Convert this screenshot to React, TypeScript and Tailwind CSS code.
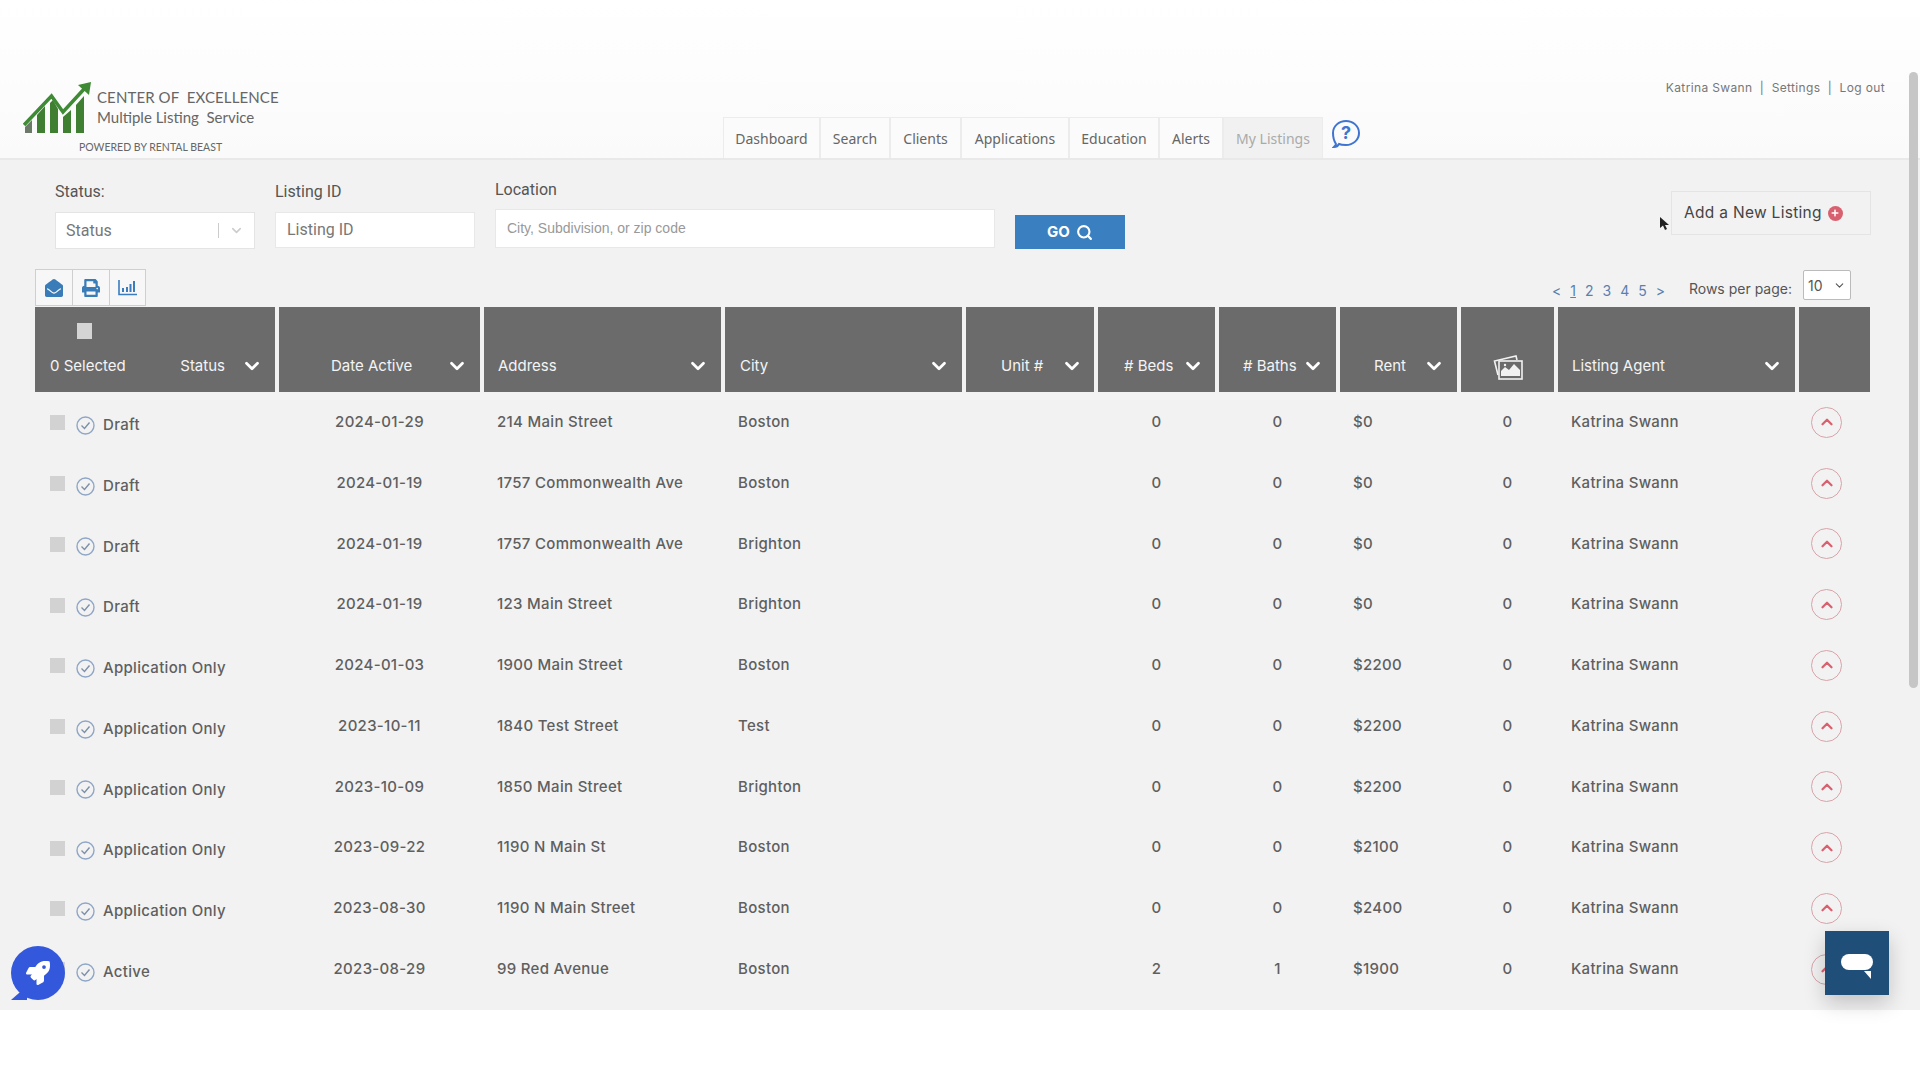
import { ChevronDown, ChevronUp, Search } from 'lucide-react'
import { FaEnvelopeOpen, FaPrint, FaRocket, FaPlus } from 'react-icons/fa'

const columns = 'grid grid-cols-[240px_201px_237px_237px_128px_117px_117px_117px_93px_237px_71px] gap-x-[4px]'

const listings = [
    { status: 'Draft', date: '2024-01-29', address: '214 Main Street', city: 'Boston', beds: 0, baths: 0, rent: '$0' },
    { status: 'Draft', date: '2024-01-19', address: '1757 Commonwealth Ave', city: 'Boston', beds: 0, baths: 0, rent: '$0' },
    { status: 'Draft', date: '2024-01-19', address: '1757 Commonwealth Ave', city: 'Brighton', beds: 0, baths: 0, rent: '$0' },
    { status: 'Draft', date: '2024-01-19', address: '123 Main Street', city: 'Brighton', beds: 0, baths: 0, rent: '$0' },
    { status: 'Application Only', date: '2024-01-03', address: '1900 Main Street', city: 'Boston', beds: 0, baths: 0, rent: '$2200' },
    { status: 'Application Only', date: '2023-10-11', address: '1840 Test Street', city: 'Test', beds: 0, baths: 0, rent: '$2200' },
    { status: 'Application Only', date: '2023-10-09', address: '1850 Main Street', city: 'Brighton', beds: 0, baths: 0, rent: '$2200' },
    { status: 'Application Only', date: '2023-09-22', address: '1190 N Main St', city: 'Boston', beds: 0, baths: 0, rent: '$2100' },
    { status: 'Application Only', date: '2023-08-30', address: '1190 N Main Street', city: 'Boston', beds: 0, baths: 0, rent: '$2400' },
    { status: 'Active', date: '2023-08-29', address: '99 Red Avenue', city: 'Boston', beds: 2, baths: 1, rent: '$1900' },
]

const tabs = [
    { label: 'Dashboard', width: 'w-[97px]' },
    { label: 'Search', width: 'w-[70px]' },
    { label: 'Clients', width: 'w-[71px]' },
    { label: 'Applications', width: 'w-[108px]' },
    { label: 'Education', width: 'w-[90px]' },
    { label: 'Alerts', width: 'w-[64px]' },
]

const Logo = () => (
    <svg width="68" height="52" viewBox="0 0 68 52">
        <path d="M2 51V45L9 38V51Z" fill="#6b7a66" />
        <path d="M14 51V33L22 24V51Z" fill="#3f7f32" />
        <path d="M27 51V21L30 18L35 27V51Z" fill="#3f7f32" />
        <path d="M40 51V35L48 28V51Z" fill="#3f7f32" />
        <path d="M53 51V23L61 14V51Z" fill="#3f7f32" />
        <path d="M1 43L28.5 14L40 30L62 6" fill="none" stroke="#3f8a35" strokeWidth="3.5" />
        <path d="M55 3L68 0L66 13Z" fill="#3f8a35" />
    </svg>
)

const HelpBubble = () => (
    <svg width="28" height="30" viewBox="0 0 28 30" className="ml-[9px] mb-[9px]">
        <path d="M4 25C2 22 1 18 1 14C1 7 7 2 14 2C21 2 27 7 27 14C27 21 21 26 14 26C11 26 9 26 7 25C6 27 4 28 2 28C3 27 4 26 4 25Z" fill="none" stroke="#3f74d0" strokeWidth="2" />
        <text x="14" y="20" textAnchor="middle" fontSize="18" fontWeight="700" fill="#3f74d0" fontFamily="Inter, sans-serif">?</text>
    </svg>
)

const ChartIcon = () => (
    <svg width="19" height="16" viewBox="0 0 19 16" fill="none" stroke="#3a7cc0">
        <path d="M1 0V14.5H19" strokeWidth="1.6" />
        <path d="M5 12V8M9 12V7M12.500 12V4M16 12V1" strokeWidth="2" />
    </svg>
)

const PhotosIcon = () => (
    <svg width="30" height="25" viewBox="0 0 30 25" fill="none" stroke="#f2f2f2" strokeWidth="1.6">
        <path d="M5 20L1.500 6L23 1L24 5" />
        <rect x="6" y="6" width="23" height="18" fill="#6b6b6b" />
        <path d="M8 21L8 16L12 12L16 15L21 9L27 15V21Z" fill="#f2f2f2" stroke="none" />
        <circle cx="12" cy="10" r="1.200" fill="#f2f2f2" stroke="none" />
    </svg>
)

const CheckCircle = () => (
    <svg width="19" height="19" viewBox="0 0 19 19" fill="none" className="shrink-0">
        <circle cx="9.500" cy="9.500" r="8.500" stroke="#8fa6c6" strokeWidth="1.400" />
        <path d="M5.500 9.500L8.500 12.500L13.500 6.500" stroke="#7d8fa8" strokeWidth="1.400" />
    </svg>
)

const HeadArrow = () => <ChevronDown size={22} strokeWidth={3} className="text-white shrink-0" />

const TableHead = () => (
    <div className={`${columns} h-[85px] text-[15px] text-[#f4f4f4] font-['Inter',sans-serif]`}>
        <div className="bg-[#6b6b6b] relative flex items-end justify-between pb-[15px] pl-[15px] pr-[12px]">
            <div className="absolute left-[42px] top-[16px] w-[15px] h-[16px] bg-[#d4d4d4]" />
            <span>0 Selected</span>
            <span className="ml-auto mr-[16px]">Status</span>
            <HeadArrow />
        </div>
        <div className="bg-[#6b6b6b] flex items-end pb-[15px] pl-[52px] pr-[12px] justify-between"><span>Date Active</span><HeadArrow /></div>
        <div className="bg-[#6b6b6b] flex items-end pb-[15px] pl-[14px] pr-[12px] justify-between"><span>Address</span><HeadArrow /></div>
        <div className="bg-[#6b6b6b] flex items-end pb-[15px] pl-[15px] pr-[12px] justify-between"><span>City</span><HeadArrow /></div>
        <div className="bg-[#6b6b6b] flex items-end pb-[15px] pl-[35px] pr-[11px] justify-between"><span>Unit #</span><HeadArrow /></div>
        <div className="bg-[#6b6b6b] flex items-end pb-[15px] pl-[26px] pr-[11px] justify-between"><span>&#35; Beds</span><HeadArrow /></div>
        <div className="bg-[#6b6b6b] flex items-end pb-[15px] pl-[24px] pr-[12px] justify-between"><span>&#35; Baths</span><HeadArrow /></div>
        <div className="bg-[#6b6b6b] flex items-end pb-[15px] pl-[34px] pr-[12px] justify-between"><span>Rent</span><HeadArrow /></div>
        <div className="bg-[#6b6b6b] flex items-end justify-center pb-[12px]"><PhotosIcon /></div>
        <div className="bg-[#6b6b6b] flex items-end pb-[15px] pl-[14px] pr-[12px] justify-between"><span>Listing Agent</span><HeadArrow /></div>
        <div className="bg-[#6b6b6b]" />
    </div>
)

const App = () => {
    return (
        <div className="relative w-[1920px] h-[1080px] overflow-hidden flex flex-col bg-white font-['Inter',sans-serif]">
            <header className="h-[160px] shrink-0 flex border-b-2 border-[#e9e9e9] bg-linear-to-b from-white to-[#fafafa]">
                <div className="w-[723px] shrink-0 pl-[23px] pt-[82px] relative">
                    <div className="flex gap-[6px]">
                        <Logo />
                        <div className="font-['Lato',sans-serif] text-[15px] leading-[20px] text-[#666] pt-[5px]">
                            <p className="tracking-[0.1px] whitespace-pre">CENTER OF  EXCELLENCE</p>
                            <p className="whitespace-pre">Multiple Listing  Service</p>
                        </div>
                    </div>
                    <p className="font-['Lato',sans-serif] text-[10.5px] leading-[12px] text-[#666] mt-[7px] ml-[56px]">POWERED BY RENTAL BEAST</p>
                </div>
                <nav className="self-end flex items-end font-['Noto_Sans',sans-serif] text-[14px] text-[#666]">
                    {tabs.map((tab) => (
                        <div key={tab.label} className={`${tab.width} h-[41px] flex items-center justify-center border border-b-0 border-[#ececec] bg-[#fbfbfb]`}>
                            {tab.label}
                        </div>
                    ))}
                    <div className="w-[100px] h-[41px] flex items-center justify-center bg-[#f1f1f1] text-[#aaa] border border-b-0 border-[#ececec]">My Listings</div>
                    <HelpBubble />
                </nav>
                <div className="ml-auto pt-[81px] pr-[35px] text-[12px] leading-[14px] tracking-[0.35px] text-[#777]">
                    Katrina Swann &nbsp;|&nbsp; Settings &nbsp;|&nbsp; Log out
                </div>
            </header>

            <main className="h-[850px] shrink-0 overflow-hidden bg-[#f2f2f2] pl-[35px] pr-[49px]">
                <div className="h-[89px] flex items-end pl-[20px]">
                    <div className="w-[200px] mr-[20px]">
                        <label className="block font-['Roboto',sans-serif] text-[16px] leading-[20px] text-[#555] mb-[10px]">Status:</label>
                        <div className="h-[37px] flex items-center bg-white border border-[#e4e4e4] pl-[10px] font-['Roboto',sans-serif] text-[16px] text-[#777]">
                            <span className="flex-1">Status</span>
                            <span className="w-px h-[15px] bg-[#ccc]" />
                            <ChevronDown size={15} strokeWidth={2.5} className="mx-[10px] text-[#ccc]" />
                        </div>
                    </div>
                    <div className="w-[200px] mr-[20px]">
                        <label className="block font-['Roboto',sans-serif] text-[16px] leading-[20px] text-[#555] mb-[10px]">Listing ID</label>
                        <div className="h-[36px] mb-px flex items-center bg-white border border-[#e8e8e8] pl-[11px] font-['Roboto',sans-serif] text-[16px] text-[#777]">Listing ID</div>
                    </div>
                    <div className="w-[500px] mr-[20px]">
                        <label className="block font-['Roboto',sans-serif] text-[16px] leading-[20px] text-[#555] mb-[9px]">Location</label>
                        <div className="h-[39px] mb-px flex items-center bg-white border border-[#e8e8e8] pl-[11px] font-['Liberation_Sans',sans-serif] text-[14px] text-[#999]">City, Subdivision, or zip code</div>
                    </div>
                    <button className="w-[110px] h-[34px] flex items-center justify-center gap-[6px] bg-[#3a80c0] text-white text-[15px] font-bold">
                        GO <Search size={17} strokeWidth={3} />
                    </button>
                    <div className="ml-auto mb-[14px] w-[200px] h-[44px] flex items-center gap-[6px] pl-[12px] border border-[#e4e4e4] text-[15.500px] tracking-[0.3px] text-[#444]">
                        Add a New Listing
                        <span className="w-[15px] h-[15px] rounded-full bg-[#d9606f] flex items-center justify-center text-white">
                            <FaPlus size={8} />
                        </span>
                    </div>
                </div>

                <div className="mt-[20px] h-[38px] flex items-center justify-between">
                    <div className="flex h-[37px] self-start border border-[#cfcfcf] bg-[#f7f7f7]">
                        <div className="w-[37px] flex items-center justify-center border-r border-[#cfcfcf]"><FaEnvelopeOpen size={18} color="#3a7cb8" /></div>
                        <div className="w-[37px] flex items-center justify-center border-r border-[#cfcfcf]"><FaPrint size={18} color="#3a7cb8" /></div>
                        <div className="w-[35px] flex items-center justify-center"><ChartIcon /></div>
                    </div>
                    <div className="flex items-center pr-[20px] text-[14px] text-[#555]">
                        <div className="flex gap-[9px] text-[#5a7fb0] mt-[4px] mr-[24px]">
                            <span>&lt;</span>
                            <span className="underline">1</span>
                            <span>2</span>
                            <span>3</span>
                            <span>4</span>
                            <span>5</span>
                            <span>&gt;</span>
                        </div>
                        <span className="mr-[11px]">Rows per page:</span>
                        <div className="w-[48px] h-[30px] flex items-center justify-between pl-[4px] pr-[4px] bg-white border border-[#bbb] rounded-[2px] -mt-[6px]">
                            10 <ChevronDown size={13} strokeWidth={2} />
                        </div>
                    </div>
                </div>

                <TableHead />

                {listings.map((row, i) => (
                    <div key={i} className={`${columns} h-[60.750px] items-center text-[15px] tracking-[0.3px] font-medium text-[#5f5f5f]`}>
                        <div className="flex items-center pl-[15px] pt-[6px]">
                            <span className="w-[15px] h-[15px] -mt-[5px] bg-[#d2d2d2] mr-[11px]" />
                            <CheckCircle />
                            <span className="ml-[8px]">{row.status}</span>
                        </div>
                        <div className="text-center">{row.date}</div>
                        <div className="pl-[13px]">{row.address}</div>
                        <div className="pl-[13px]">{row.city}</div>
                        <div />
                        <div className="text-center">{row.beds}</div>
                        <div className="text-center">{row.baths}</div>
                        <div className="pl-[13px]">{row.rent}</div>
                        <div className="text-center">0</div>
                        <div className="pl-[13px]">Katrina Swann</div>
                        <div className="pl-[12px]">
                            <span className="w-[31px] h-[31px] rounded-full border border-[#d9a3aa] flex items-center justify-center">
                                <ChevronUp size={18} strokeWidth={3} className="text-[#d9606f]" />
                            </span>
                        </div>
                    </div>
                ))}
            </main>

            <div className="absolute right-[2px] top-[72px] w-[9px] h-[616px] rounded-full bg-[#c6c6c6]" />

            <svg width="11" height="16" viewBox="0 0 11 16" className="absolute left-[1659px] top-[216px]">
                <path d="M1 1V12L4 9.500L6 14L8 13L6 9H10Z" fill="#222" />
            </svg>

            <div className="absolute left-[11px] top-[946px] w-[54px] h-[54px]">
                <div className="absolute left-0 bottom-0 w-0 h-0 border-t-[14px] border-t-transparent border-r-[16px] border-r-[#3358dc]" />
                <div className="absolute inset-0 rounded-full bg-[#3358dc] flex items-center justify-center text-white">
                    <FaRocket size={24} />
                </div>
            </div>

            <div className="absolute left-[1825px] top-[931px] w-[64px] h-[64px] bg-[#1f4e79] shadow-[0_8px_20px_rgba(0,0,0,0.2)] flex items-center justify-center">
                <div className="relative w-[32px] h-[16px] rounded-full bg-white -mt-[2px]">
                    <div className="absolute right-[2px] -bottom-[9px] w-0 h-0 border-t-[8px] border-t-white border-l-[7px] border-l-transparent" />
                </div>
            </div>
        </div>
    )
}; export default App
